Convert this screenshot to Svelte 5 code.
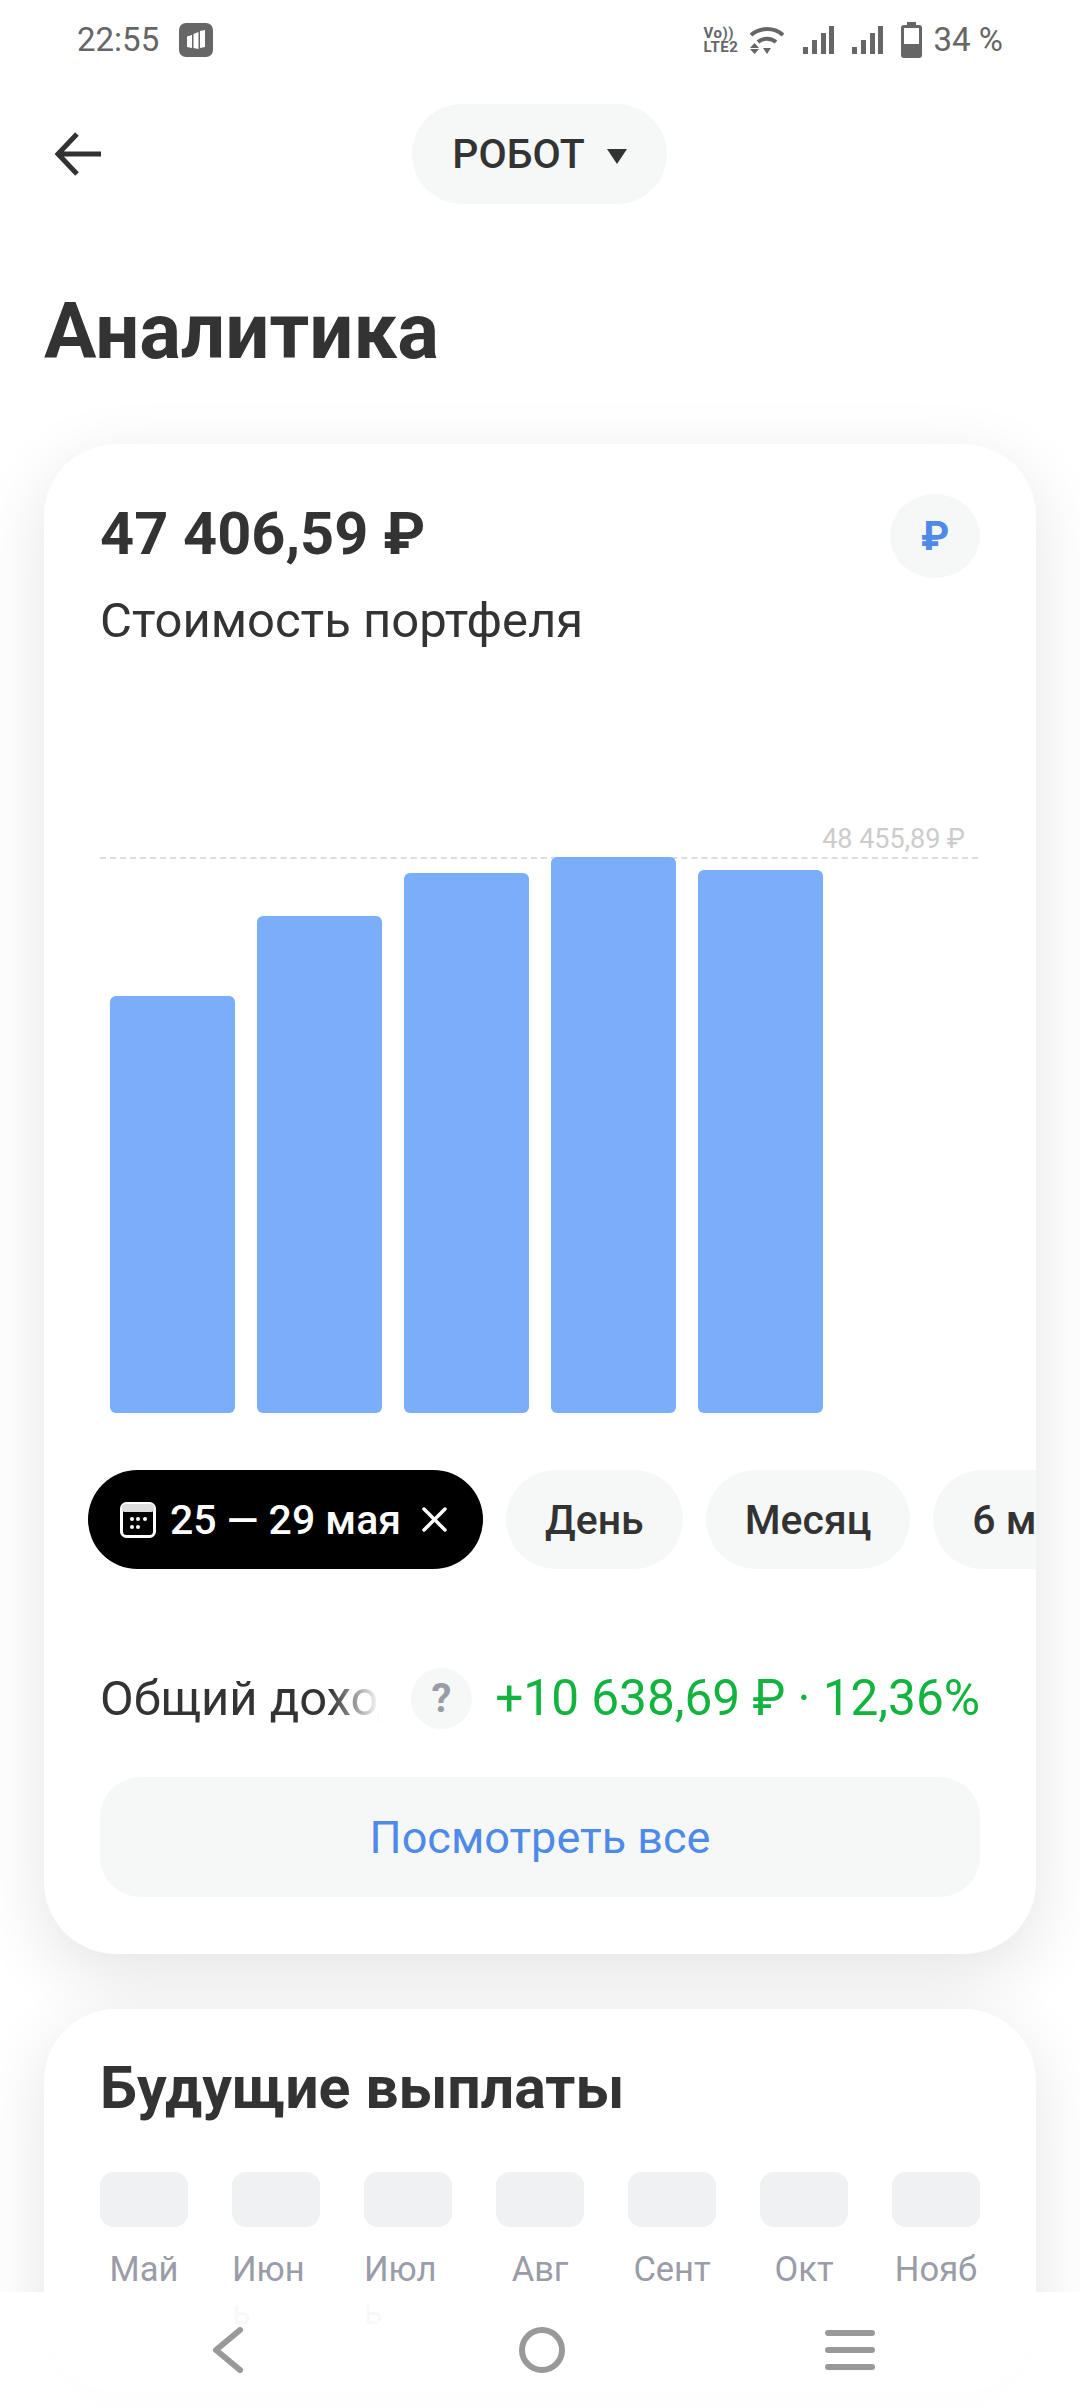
<script>
  const bars = [417, 497, 540, 556, 543];
  const months = ["Май", "Июнь", "Июль", "Авг", "Сент", "Окт", "Нояб"];
  const chips = ["День", "Месяц", "6 мес"];
</script>

<div class="page">
  <header class="status">
    <div class="status-left">
      <span>22:55</span>
      <svg class="app-icon" width="34" height="34" viewBox="0 0 34 34">
        <rect width="34" height="34" rx="7" fill="#666" />
        <path d="M8 13.5l5-1.5v13l-5-1zM14.5 11l5-2v17l-5-1zM21 8l5-1v17l-5 1z" fill="#fff" />
      </svg>
    </div>
    <div class="status-right">
      <div class="volte"><span>Vo))</span><span>LTE2</span></div>
      <svg width="34" height="28" viewBox="0 0 34 28" fill="none" stroke="#666">
        <path d="M1 9C10 1 24 1 33 9" stroke-width="4" />
        <path d="M8 16c5-4.500 13-4.500 18 0" stroke-width="4" />
        <path d="M0 22l4.500-5 4.500 5zM0 23h9l-4.500 5zM13 22h8l-4 6z" fill="#666" stroke="none" />
      </svg>
      <svg class="signal" width="31" height="28" viewBox="0 0 31 28" fill="#666">
        <rect x="0" y="21" width="5" height="7" />
        <rect x="9" y="14" width="5" height="14" />
        <rect x="18" y="7" width="5" height="21" />
        <rect x="26" y="0" width="5" height="28" />
      </svg>
      <svg class="signal" width="31" height="28" viewBox="0 0 31 28" fill="#666">
        <rect x="0" y="21" width="5" height="7" />
        <rect x="9" y="14" width="5" height="14" />
        <rect x="18" y="7" width="5" height="21" />
        <rect x="26" y="0" width="5" height="28" />
      </svg>
      <svg class="battery" width="21" height="36" viewBox="0 0 21 36">
        <path d="M6 0h9v3h3a3 3 0 0 1 3 3v27a3 3 0 0 1-3 3H3a3 3 0 0 1-3-3V6a3 3 0 0 1 3-3h3z" fill="#666" />
        <rect x="3" y="6" width="15" height="16" fill="#fff" />
      </svg>
      <span class="percent">34 %</span>
    </div>
  </header>

  <nav class="topbar">
    <svg class="back" width="46" height="44" viewBox="0 0 46 44" fill="none" stroke="#333" stroke-width="5">
      <path d="M46 22H3M22 2L3 22l19 20" />
    </svg>
    <button class="selector">РОБОТ <span class="caret"></span></button>
  </nav>

  <h1>Аналитика</h1>

  <section class="card">
    <div class="summary">
      <div>
        <div class="amount">47 406,59 ₽</div>
        <div class="caption">Стоимость портфеля</div>
      </div>
      <div class="currency">₽</div>
    </div>

    <div class="chart">
      <div class="max-label">48 455,89 ₽</div>
      <div class="plot">
        {#each bars as h}
          <div class="bar" style="height: {h}px"></div>
        {/each}
      </div>
    </div>

    <div class="chips">
      <div class="chip active">
        <svg width="36" height="36" viewBox="0 0 36 36" fill="none">
          <rect x="1.500" y="1.500" width="33" height="33" rx="5" stroke="#fff" stroke-width="3" />
          <rect x="2" y="2" width="32" height="8" rx="3" fill="#ddd" />
          <g fill="#fff">
            <circle cx="12" cy="17" r="2" /><circle cx="18" cy="17" r="2" /><circle cx="25" cy="17" r="2" />
            <circle cx="12" cy="25" r="2" /><circle cx="18" cy="25" r="2" />
          </g>
        </svg>
        <span class="range">25 — 29 мая</span>
        <svg class="close" width="25" height="25" viewBox="0 0 25 25" stroke="#fff" stroke-width="3.500" stroke-linecap="round">
          <path d="M2 2l21 21M23 2L2 23" />
        </svg>
      </div>
      {#each chips as chip}
        <div class="chip">{chip}</div>
      {/each}
    </div>

    <div class="income">
      <div class="income-label">Общий доход</div>
      <div class="help">?</div>
      <div class="income-value">+10 638,69 ₽ · 12,36%</div>
    </div>

    <button class="view-all">Посмотреть все</button>
  </section>

  <section class="card payouts">
    <h2>Будущие выплаты</h2>
    <div class="months">
      {#each months as m}
        <div class="month">
          <div class="month-box"></div>
          <div class="month-name">{m}</div>
        </div>
      {/each}
    </div>
  </section>

  <div class="navbar">
    <svg width="46" height="46" viewBox="0 0 46 46" fill="none" stroke="#999" stroke-width="6" stroke-linecap="round" stroke-linejoin="round">
      <path d="M28 3L4 23l24 20" />
    </svg>
    <svg width="46" height="46" viewBox="0 0 46 46" fill="none" stroke="#999" stroke-width="6">
      <circle cx="23" cy="23" r="20" />
    </svg>
    <svg width="50" height="40" viewBox="0 0 50 40" fill="#999">
      <rect width="50" height="6" rx="3" />
      <rect y="17" width="50" height="6" rx="3" />
      <rect y="34" width="50" height="6" rx="3" />
    </svg>
  </div>
</div>

<style>
  :global(body) {
    margin: 0;
    background: #fff;
    font-family: Roboto, "Noto Sans", sans-serif;
  }

  .page {
    position: relative;
    width: 1080px;
    height: 2408px;
    overflow: hidden;
    background: #fff;
    color: #333;
  }

  /* status bar */
  .status {
    height: 79px;
    display: flex;
    align-items: center;
    justify-content: space-between;
    padding: 0 77px;
    font-size: 33px;
    color: #666;
  }
  .status-left {
    display: flex;
    align-items: center;
    gap: 20px;
  }
  .status-right {
    display: flex;
    align-items: center;
    gap: 8px;
  }
  .volte {
    display: flex;
    flex-direction: column;
    font-size: 15px;
    font-weight: 700;
    line-height: 14px;
    letter-spacing: 0.5px;
    width: 38px;
  }
  .signal {
    margin-left: 11px;
  }
  .signal + .signal {
    margin-left: 10px;
  }
  .battery {
    margin-left: 10px;
  }
  .percent {
    margin-left: 4px;
  }

  /* top bar */
  .topbar {
    position: relative;
    height: 100px;
    margin-top: 25px;
    display: flex;
    align-items: center;
    justify-content: center;
  }
  .back {
    position: absolute;
    left: 55px;
    top: 28px;
  }
  .selector {
    height: 100px;
    width: 255px;
    margin-left: -1px;
    border: 0;
    border-radius: 50px;
    background: #f6f8f8;
    color: #333;
    font: 500 41px Roboto, sans-serif;
    display: flex;
    align-items: center;
    justify-content: center;
    gap: 22px;
  }
  .caret {
    width: 0;
    height: 0;
    border-left: 10px solid transparent;
    border-right: 10px solid transparent;
    border-top: 15px solid #333;
    margin-top: 4px;
  }

  h1 {
    margin: 86px 0 0 44px;
    font-size: 78px;
    line-height: 84px;
    font-weight: 700;
    color: #333;
  }

  /* cards */
  .card {
    margin: 70px 44px 0;
    padding: 50px 56px 57px;
    background: #fff;
    border-radius: 72px;
    box-shadow: 0 20px 70px rgba(0, 0, 0, 0.11);
  }
  .summary {
    display: flex;
    justify-content: space-between;
    align-items: flex-start;
  }
  .amount {
    font-size: 59.5px;
    font-weight: 700;
    line-height: 80px;
    color: #333;
  }
  .caption {
    margin-top: 15px;
    font-size: 49px;
    line-height: 64px;
  }
  .currency {
    width: 90px;
    height: 84px;
    border-radius: 50%;
    background: #f6f8f8;
    color: #4f8ae8;
    font-size: 40px;
    font-weight: 700;
    display: flex;
    align-items: center;
    justify-content: center;
  }

  .chart {
    margin-top: 168px;
  }
  .max-label {
    text-align: right;
    padding-right: 15px;
    font-size: 27px;
    line-height: 36px;
    color: #ccc;
  }
  .plot {
    height: 554px;
    border-top: 2px dashed #ddd;
    display: flex;
    align-items: flex-end;
    gap: 22px;
    padding-left: 10px;
    margin-right: 2px;
  }
  .bar {
    width: 125px;
    background: #7aadfa;
    border-radius: 6px;
  }

  .chips {
    display: flex;
    gap: 23px;
    margin: 57px -56px 0 -12px;
    overflow: hidden;
  }
  .chip {
    flex: none;
    height: 99px;
    padding: 0 39px;
    border-radius: 50px;
    background: #f6f8f8;
    font-size: 41px;
    font-weight: 500;
    display: flex;
    align-items: center;
    color: #333;
  }
  .chip.active {
    background: #000;
    color: #fff;
    padding: 0 36px 0 32px;
  }
  .range {
    margin-left: 14px;
  }
  .close {
    margin-left: 21px;
  }

  .income {
    display: flex;
    align-items: center;
    margin-top: 99px;
    height: 60px;
    font-size: 49.5px;
  }
  .income-label {
    width: 280px;
    font-size: 49px;
    white-space: nowrap;
    overflow: hidden;
    -webkit-mask-image: linear-gradient(to right, #000 82%, transparent 100%);
    mask-image: linear-gradient(to right, #000 82%, transparent 100%);
  }
  .help {
    width: 61px;
    height: 61px;
    margin-left: 31px;
    border-radius: 50%;
    background: #f6f8f8;
    color: #9a9ca8;
    font-size: 40px;
    font-weight: 700;
    display: flex;
    align-items: center;
    justify-content: center;
  }
  .income-value {
    margin-left: auto;
    color: #12b33f;
    white-space: nowrap;
  }

  .view-all {
    display: block;
    width: 100%;
    height: 120px;
    margin-top: 49px;
    border: 0;
    border-radius: 40px;
    background: #f6f8f8;
    color: #4f8ae8;
    font: 400 45px Roboto, sans-serif;
  }

  .payouts {
    margin-top: 55px;
    padding-top: 46px;
  }
  h2 {
    margin: 0;
    font-size: 59px;
    line-height: 66px;
    font-weight: 700;
    color: #333;
  }
  .months {
    display: flex;
    justify-content: space-between;
    margin-top: 51px;
  }
  .month {
    width: 88px;
    font-size: 34.5px;
    line-height: 43px;
    color: #9a9ca8;
    text-align: center;
  }
  .month-box {
    height: 55px;
    margin-bottom: 21px;
    border-radius: 14px;
    background: #eff1f2;
  }
  .month-name {
    display: inline-block;
    max-width: 100%;
    text-align: left;
    overflow-wrap: anywhere;
  }

  /* system navigation */
  .navbar {
    position: absolute;
    left: 0;
    right: 0;
    bottom: 0;
    height: 116px;
    background: rgba(255, 255, 255, 0.93);
    display: flex;
    align-items: center;
    padding: 0 205px 0 212px;
    justify-content: space-between;
  }
</style>
